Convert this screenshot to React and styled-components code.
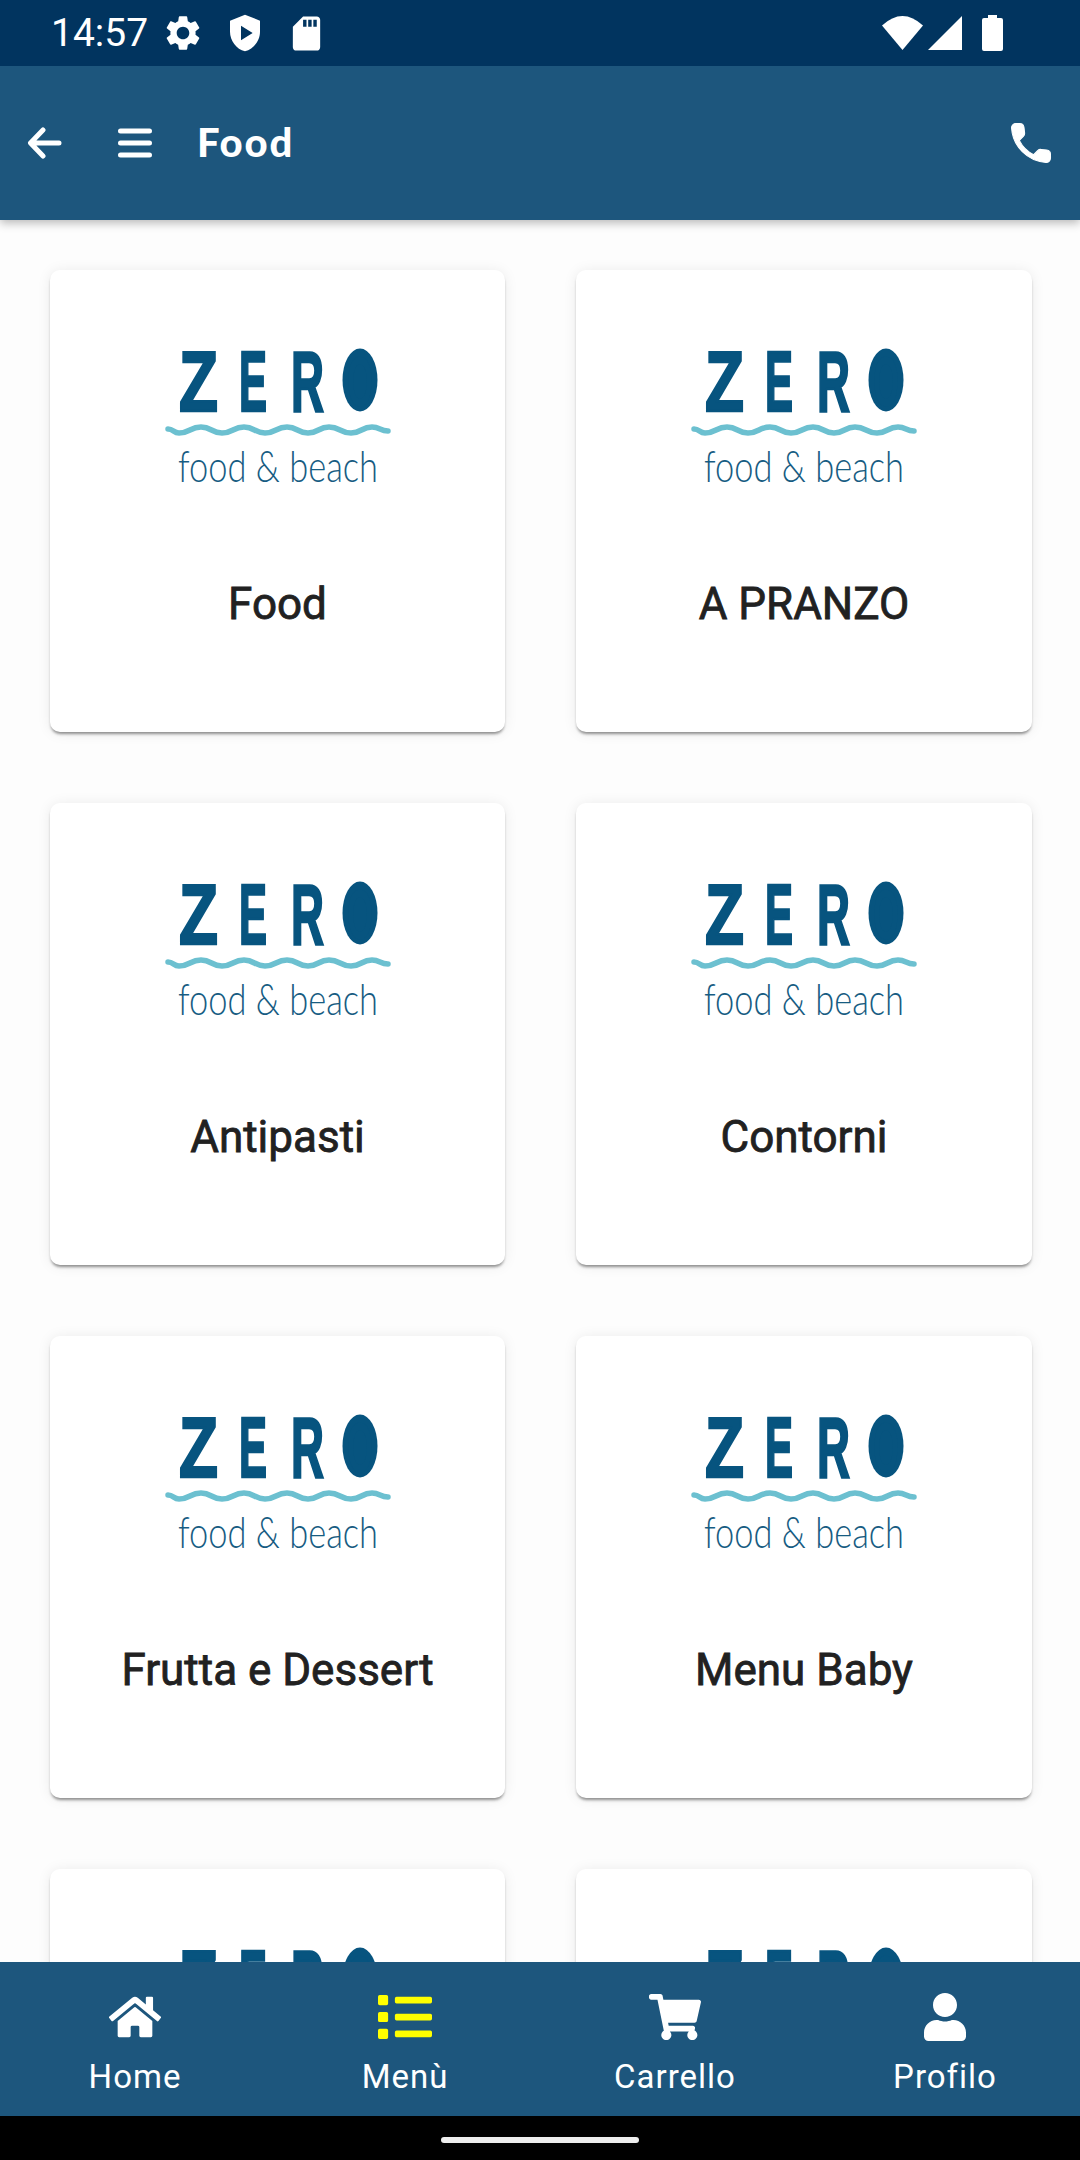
import React from "react";
import styled, { createGlobalStyle } from "styled-components";
import { FaHome, FaList, FaShoppingCart, FaUser } from "react-icons/fa";
import { MdSettings, MdSdCard } from "react-icons/md";

const GlobalStyle = createGlobalStyle`
  html, body {
    margin: 0;
    padding: 0;
    background: #fff;
    font-family: "Roboto", "Liberation Sans", sans-serif;
  }
`;

const Screen = styled.div`
  width: 1080px;
  height: 2160px;
  display: flex;
  flex-direction: column;
  overflow: hidden;
  background: #fdfdfd;
`;

const StatusBar = styled.div`
  height: 66px;
  flex: none;
  display: flex;
  align-items: center;
  gap: 21px;
  padding: 0 77px 0 51px;
  background: #01345f;
  color: #fff;
  position: relative;
  z-index: 3;
`;

const Clock = styled.span`
  font-size: 39px;
  line-height: 66px;
  margin-right: -7px;
`;

const StatusRight = styled.div`
  margin-left: auto;
  display: flex;
  align-items: center;
  gap: 5px;
`;

const BatteryIcon = styled.svg`
  margin-left: 15px;
`;

const Toolbar = styled.div`
  height: 154px;
  flex: none;
  display: flex;
  align-items: center;
  padding: 0 23px 0 27px;
  background: #1d567d;
  color: #fff;
  box-shadow: 0 3px 9px rgba(0, 0, 0, 0.28);
  position: relative;
  z-index: 2;
`;

const ToolIcon = styled.svg`
  display: block;
  margin-right: ${(p) => p.$gap || 0}px;
`;

const PageTitle = styled.h1`
  margin: -3px 0 0 -3px;
  font-family: "Lato", "Liberation Sans", sans-serif;
  font-weight: 900;
  font-size: 40px;
  letter-spacing: 1.8px;
  color: #fff;
`;

const CallButton = styled.div`
  margin-left: auto;
  display: flex;
`;

const Content = styled.main`
  flex: 1;
  min-height: 0;
  overflow: hidden;
`;

const Grid = styled.div`
  display: grid;
  grid-template-columns: 455px 456px;
  gap: 71px;
  padding: 50px 0 0 50px;
`;

const Card = styled.div`
  height: 462px;
  box-sizing: border-box;
  padding-top: 74px;
  display: flex;
  flex-direction: column;
  align-items: center;
  background: #fff;
  border-radius: 10px;
  box-shadow: 0 3px 3px -1px rgba(0, 0, 0, 0.42), 0 1px 14px rgba(0, 0, 0, 0.08);
`;

const LogoSvg = styled.svg`
  display: block;
  flex: none;
`;

const CardTitle = styled.div`
  margin-top: 87px;
  font-size: 44px;
  line-height: 50px;
  font-weight: 400;
  -webkit-text-stroke: 0.8px #212121;
  color: #212121;
  text-align: center;
`;

const BottomNav = styled.nav`
  height: 154px;
  flex: none;
  display: grid;
  grid-template-columns: repeat(4, 1fr);
  background: #1d567d;
  position: relative;
  z-index: 2;
`;

const NavItem = styled.div`
  display: flex;
  flex-direction: column;
  align-items: center;
  padding-top: 31px;
  color: ${(p) => (p.$active ? "#ffff00" : "#fff")};
`;

const NavIcon = styled.div`
  height: 48px;
  display: flex;
  align-items: center;
  justify-content: center;
`;

const NavLabel = styled.span`
  margin-top: 16px;
  font-size: 33px;
  line-height: 40px;
  letter-spacing: 1px;
  color: #fff;
`;

const GestureBar = styled.div`
  height: 44px;
  flex: none;
  display: flex;
  justify-content: center;
  padding-top: 21px;
  box-sizing: border-box;
  background: #000;
`;

const GesturePill = styled.div`
  width: 198px;
  height: 6px;
  border-radius: 3px;
  background: #eee;
`;

const categories = [
  "Food",
  "A PRANZO",
  "Antipasti",
  "Contorni",
  "Frutta e Dessert",
  "Menu Baby",
  "",
  "",
];

const navItems = [
  { label: "Home", icon: <FaHome size={52} /> },
  { label: "Menù", icon: <FaList size={54} />, active: true },
  { label: "Carrello", icon: <FaShoppingCart size={52} /> },
  { label: "Profilo", icon: <FaUser size={48} /> },
];

// wave under the logo: smooth curve through its crests and troughs
const wavePoints = [
  [5, 85], [16, 89], [38, 83], [59, 89], [81, 83], [102, 89],
  [124, 83], [145, 89], [166, 83], [188, 89], [209, 83], [225, 87],
];
const wavePath = wavePoints.reduce((d, [x, y], i) => {
  if (i === 0) return `M${x} ${y}`;
  const [px, py] = wavePoints[i - 1];
  const mid = (px + x) / 2;
  return `${d}C${mid} ${py} ${mid} ${y} ${x} ${y}`;
}, "");

function Logo() {
  const letter = {
    fontFamily: "Liberation Sans",
    fontWeight: 700,
    fontSize: 86,
    fill: "#07547f",
    stroke: "#07547f",
    strokeWidth: 2.5,
    lengthAdjust: "spacingAndGlyphs",
  };
  return (
    <LogoSvg width="230" height="148" viewBox="0 0 230 148">
      <text x="16" y="67" textLength="39" {...letter}>Z</text>
      <text x="76" y="67" textLength="28" {...letter}>E</text>
      <text x="128" y="67" textLength="33" {...letter}>R</text>
      <ellipse cx="197" cy="36" rx="17.5" ry="31.500" fill="#07547f" />
      <text x="184" y="62" fontSize="70" textLength="26" lengthAdjust="spacingAndGlyphs" fontFamily="Liberation Sans" fontWeight="700" fill="#07547f">
        O
      </text>
      <path d={wavePath} fill="none" stroke="#6cc0d0" strokeWidth="5.5" strokeLinecap="round" />
      <text x="15" y="138" fontFamily="Lato" fontWeight="300" fontSize="44" textLength="200" lengthAdjust="spacingAndGlyphs" fill="#175c82">
        food &amp; beach
      </text>
    </LogoSvg>
  );
}

export default function App() {
  return (
    <Screen>
      <GlobalStyle />
      <StatusBar>
        <Clock>14:57</Clock>
        <MdSettings size={42} />
        <svg width="40" height="40" viewBox="0 0 24 24" fill="#fff">
          <path
            fillRule="evenodd"
            d="M12 1 3 4.6v6.6c0 5.4 3.8 10.4 9 11.8 5.2-1.4 9-6.4 9-11.8V4.6L12 1zM9.6 7.6l7 4.4-7 4.4V7.6z"
          />
        </svg>
        <MdSdCard size={41} />
        <StatusRight>
          <svg width="41" height="34" viewBox="0 0 41 34" fill="#fff">
            <path d="M0 9.5Q20.5-9.5 41 9.5L20.5 34Z" />
          </svg>
          <svg width="34" height="34" viewBox="0 0 34 34" fill="#fff">
            <path d="M0 34 34 0V34Z" />
          </svg>
          <BatteryIcon width="21" height="36" viewBox="0 0 21 36" fill="#fff">
            <path d="M6 0h9v3h4a2 2 0 0 1 2 2v29a2 2 0 0 1-2 2H2a2 2 0 0 1-2-2V5a2 2 0 0 1 2-2h4z" />
          </BatteryIcon>
        </StatusRight>
      </StatusBar>

      <Toolbar>
        <ToolIcon $gap={56} width="35" height="32" viewBox="0 0 35 32" fill="none" stroke="#fff" strokeWidth="5" strokeLinecap="round" strokeLinejoin="round">
          <path d="M32 16H4M16 3 3.500 16 16 29" />
        </ToolIcon>
        <ToolIcon $gap={48} width="34" height="30" viewBox="0 0 34 30" fill="none" stroke="#fff" strokeWidth="5" strokeLinecap="round">
          <path d="M2.500 3h29M2.500 15h29M2.500 27h29" />
        </ToolIcon>
        <PageTitle>Food</PageTitle>
        <CallButton>
          <svg width="52" height="52" viewBox="0 0 24 24" fill="#fff" stroke="#fff" strokeWidth="0.5">
            <path d="M19.23 15.26l-2.54-.29c-.61-.07-1.21.14-1.64.57l-1.84 1.84c-2.83-1.44-5.15-3.75-6.59-6.59l1.85-1.85c.43-.43.64-1.03.57-1.64l-.29-2.52c-.12-1.01-.97-1.77-1.99-1.77H5.03c-1.13 0-2.07.94-2 2.07.53 8.54 7.36 15.36 15.89 15.89 1.13.07 2.07-.87 2.07-2v-1.73c.01-1.01-.75-1.86-1.76-1.98z" />
          </svg>
        </CallButton>
      </Toolbar>

      <Content>
        <Grid>
          {categories.map((name, i) => (
            <Card key={i}>
              <Logo />
              <CardTitle>{name}</CardTitle>
            </Card>
          ))}
        </Grid>
      </Content>

      <BottomNav>
        {navItems.map((item) => (
          <NavItem key={item.label} $active={item.active}>
            <NavIcon>{item.icon}</NavIcon>
            <NavLabel>{item.label}</NavLabel>
          </NavItem>
        ))}
      </BottomNav>
      <GestureBar>
        <GesturePill />
      </GestureBar>
    </Screen>
  );
}
